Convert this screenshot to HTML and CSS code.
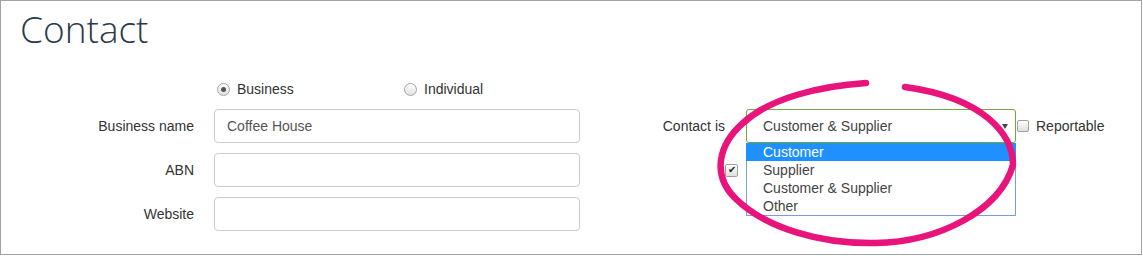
FILE: index.html
```html
<!DOCTYPE html>
<html lang="en">
<head>
<meta charset="utf-8">
<title>Contact</title>
<link rel="stylesheet" href="styles.css">
</head>
<body>
<div class="frame">
  <h1 class="title">Contact</h1>
  <div class="form">
    <div class="radios">
      <label class="radio-opt"><span class="radio checked"></span><span>Business</span></label>
      <label class="radio-opt"><span class="radio"></span><span>Individual</span></label>
    </div>

    <div class="lbl r2">Business name</div>
    <div class="input r2">Coffee House</div>
    <div class="lbl lbl-right r2">Contact is</div>
    <div class="select-wrap r2">
      <div class="select"><span>Customer &amp; Supplier</span><span class="caret"></span></div>
      <ul class="options">
        <li class="opt active">Customer</li>
        <li class="opt">Supplier</li>
        <li class="opt">Customer &amp; Supplier</li>
        <li class="opt">Other</li>
      </ul>
    </div>
    <label class="reportable r2"><span class="check"></span><span>Reportable</span></label>

    <div class="lbl r3">ABN</div>
    <div class="input r3"></div>
    <span class="check checked r3 gapcol">&#10004;</span>

    <div class="lbl r4">Website</div>
    <div class="input r4"></div>
  </div>
  <svg class="annot" viewBox="0 0 1143 256" width="1143" height="256" aria-hidden="true">
    <path d="M866 83 C 820 86, 770 98, 743 123 C 718 145, 712 175, 735 198 C 765 228, 820 244, 875 243 C 940 242, 1000 210, 1013 165 C 1013 135, 985 98, 905 87" fill="none" stroke="#e8147b" stroke-width="6.5" stroke-linecap="round"/>
  </svg>
</div>
</body>
</html>
```

FILE: styles.css
```css
html, body {
  margin: 0;
  padding: 0;
  background: #fff;
}

.frame {
  position: relative;
  box-sizing: border-box;
  width: 1142px;
  height: 255px;
  border: 1px solid #a3a3a3;
  background: #fff;
  font-family: "Liberation Sans", Arial, sans-serif;
  font-size: 14px;
  color: #333;
  overflow: hidden;
}

.title {
  margin: 6px 0 0 0;
  padding-left: 19px;
  font-family: "Open Sans", sans-serif;
  font-weight: 300;
  font-size: 37px;
  line-height: 44px;
  color: #2b3a4b;
}

.form {
  display: grid;
  grid-template-columns: 193px 20px 366px 145px 21px 270px auto;
  grid-template-rows: 20px 34px 34px 34px;
  row-gap: 10px;
  padding-top: 28px;
}

.radios {
  grid-row: 1;
  grid-column: 3 / span 2;
  display: flex;
  align-items: center;
  padding-left: 3px;
}

.radio-opt {
  display: flex;
  align-items: center;
  gap: 7px;
  width: 187px;
  color: #333;
}

.radio {
  box-sizing: border-box;
  width: 13px;
  height: 13px;
  border-radius: 50%;
  border: 1px solid #a6a6a6;
  background: linear-gradient(#fdfdfd, #e2e2e2);
  display: flex;
  align-items: center;
  justify-content: center;
}

.radio.checked::after {
  content: "";
  width: 5px;
  height: 5px;
  border-radius: 50%;
  background: #555;
}

.r2 { grid-row: 2; }
.r3 { grid-row: 3; }
.r4 { grid-row: 4; }

.lbl {
  grid-column: 1;
  align-self: center;
  justify-self: end;
  color: #333;
}

.lbl-right {
  grid-column: 4;
}

.input {
  grid-column: 3;
  box-sizing: border-box;
  height: 34px;
  border: 1px solid #ccc;
  border-radius: 4px;
  padding: 0 12px;
  display: flex;
  align-items: center;
  color: #555;
}

.select-wrap {
  grid-column: 6;
  position: relative;
}

.select {
  box-sizing: border-box;
  height: 34px;
  border: 1px solid #74a83c;
  border-radius: 3px;
  padding: 0 7px 0 16px;
  display: flex;
  align-items: center;
  justify-content: space-between;
  color: #444;
}

.caret {
  width: 0;
  height: 0;
  border-left: 3px solid transparent;
  border-right: 3px solid transparent;
  border-top: 5px solid #444;
}

.options {
  position: absolute;
  top: 100%;
  left: 0;
  right: 0;
  margin: 0;
  padding: 0;
  list-style: none;
  border: 1px solid #7d9dd6;
  border-top: none;
  background: #fff;
}

.opt {
  height: 18px;
  line-height: 18px;
  padding-left: 16px;
  color: #444;
}

.opt.active {
  background: #1e90ff;
  color: #fff;
  margin: 0 -1px;
  padding-left: 17px;
}

.reportable {
  grid-column: 7;
  display: flex;
  align-items: center;
  gap: 7px;
  padding-left: 1px;
  color: #333;
}

.check {
  box-sizing: border-box;
  width: 12px;
  height: 12px;
  border: 1px solid #a0a0a0;
  border-radius: 2px;
  background: linear-gradient(#fdfdfd, #e0e0e0);
  display: inline-flex;
  align-items: center;
  justify-content: center;
  font-size: 10px;
  line-height: 1;
  color: #222;
}

.check.checked {
  width: 13px;
  height: 13px;
}

.gapcol {
  grid-column: 5;
  align-self: center;
  justify-self: start;
}

.annot {
  position: absolute;
  left: -1px;
  top: -1px;
  pointer-events: none;
}
```
